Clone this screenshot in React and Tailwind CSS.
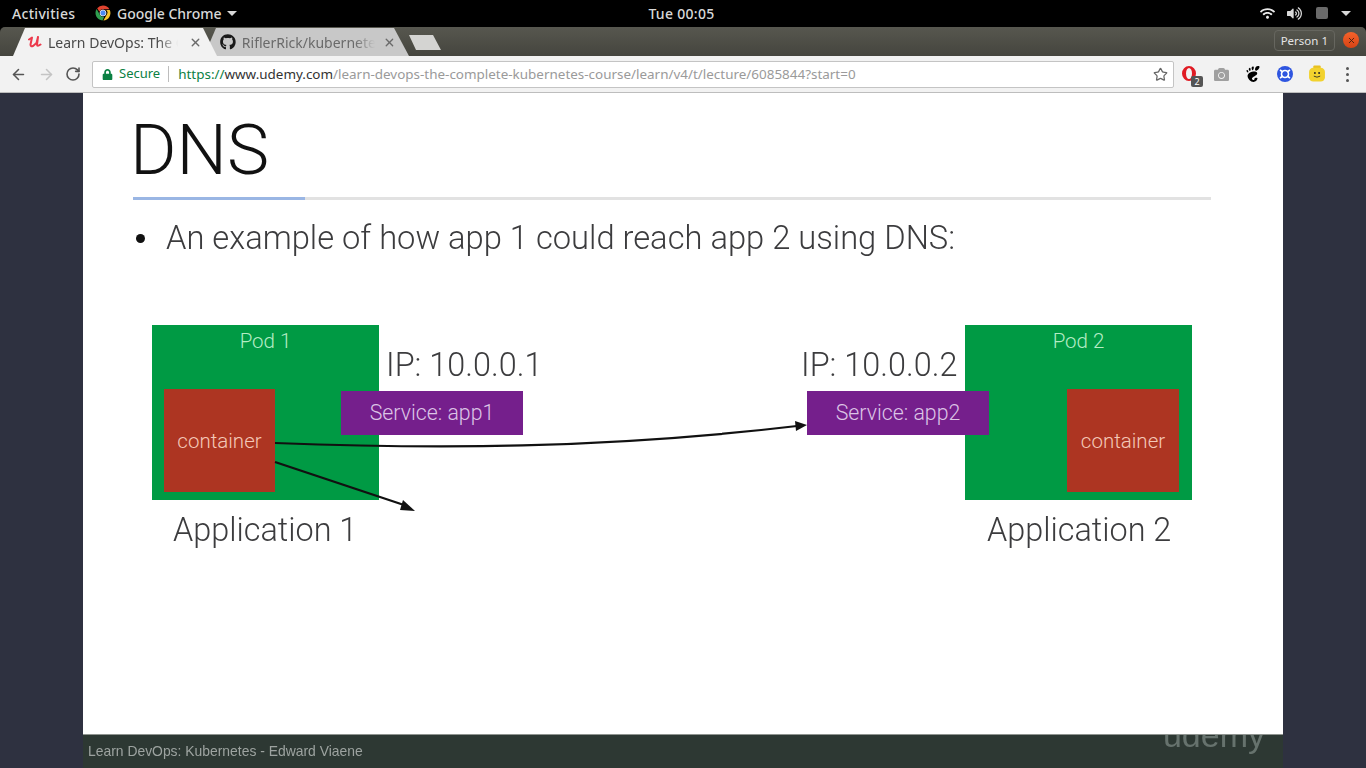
import React from 'react';
import { ArrowLeft, ArrowRight, RotateCw, Star, X } from 'lucide-react';
import { FaGithub, FaCamera, FaWifi, FaVolumeUp, FaLock } from 'react-icons/fa';
import { SiGnome } from 'react-icons/si';

function ChromeLogo() {
    return (
        <svg width="16" height="16" viewBox="0 0 32 32">
            <path d="M16 1a15 15 0 0 1 13 7.5H16a7.5 7.5 0 0 0-7 4.8L4.3 6.5A15 15 0 0 1 16 1z" fill="#e0432f" />
            <path d="M29.6 10a15 15 0 0 1-12.8 21l6.6-11.3a7.5 7.5 0 0 0-.9-9.7z" fill="#f7c52b" />
            <path d="M15 31A15 15 0 0 1 3.2 8.2l6.6 11.4a7.5 7.5 0 0 0 8.6 3.8z" fill="#2f9e4f" />
            <circle cx="16" cy="16" r="6" fill="#4c8bf0" stroke="#fff" strokeWidth="1.5" />
        </svg>
    );
}

function UdemyMark() {
    return (
        <svg width="14" height="14" viewBox="0 0 14 14" fill="none" stroke="#ec3a4c" strokeWidth="2" strokeLinecap="round" strokeLinejoin="round">
            <path d="M1 4.5 L4 2.5 L2.5 9.5 Q2.5 12 5 11 L8.5 8 L10 2 L9 9.5 Q9 12 12.5 9.5" />
        </svg>
    );
}

function TopBar() {
    return (
        <div className="grid h-[27px] grid-cols-[1fr_auto_1fr] items-center bg-black pb-[1px] pl-3 pr-[15px] font-['Noto_Sans',sans-serif] text-[14px] font-medium text-[#d8d8d8]">
            <div className="flex items-center">
                <span className="w-[83px] tracking-[0.3px]">Activities</span>
                <ChromeLogo />
                <span className="ml-1.5">Google Chrome</span>
                <span className="ml-[5px] h-0 w-0 border-x-[5px] border-t-[5px] border-x-transparent border-t-[#d8d8d8]"></span>
            </div>
            <span className="tracking-[0.3px]">Tue 00:05</span>
            <div className="flex items-center justify-end">
                <FaWifi className="text-[15px] text-[#e8e8e8]" />
                <FaVolumeUp className="ml-[12px] text-[15px] text-[#d8d8d8]" />
                <span className="ml-[14px] h-[12px] w-[12px] rounded-[2px] bg-[#6a6a6a]"></span>
                <span className="ml-[13px] h-0 w-0 border-x-[5px] border-t-[5px] border-x-transparent border-t-[#d8d8d8]"></span>
            </div>
        </div>
    );
}

function TabStrip() {
    return (
        <div className="flex h-[29px] items-end rounded-t-[5px] bg-gradient-to-b from-[#57574f] to-[#45453e] font-['Noto_Sans',sans-serif] text-[14px]">
            <div className="z-10 ml-[13px] flex h-[28px] w-[204px] items-center bg-[#f2f2f2] pl-[15px] pr-[10px] text-[#4a4a4a] [clip-path:polygon(0_100%,12px_0,190px_0,100%_100%)]">
                <UdemyMark />
                <span className="ml-1.5 w-[130px] overflow-hidden whitespace-nowrap [mask-image:linear-gradient(to_right,black_85%,transparent)]">Learn DevOps: The Complete</span>
                <X size={13} strokeWidth={2.5} className="ml-[11px] text-[#6a6a6a]" />
            </div>
            <div className="z-0 -ml-[13px] flex h-[28px] w-[205px] items-center bg-[#c8c8c8] pl-[16px] pr-[13px] text-[#6a6a6a] [clip-path:polygon(0_100%,12px_0,190px_0,100%_100%)]">
                <FaGithub className="text-[16px] text-[#1a1a1a]" />
                <span className="ml-1.5 w-[135px] overflow-hidden whitespace-nowrap [mask-image:linear-gradient(to_right,black_85%,transparent)]">RiflerRick/kubernetes</span>
                <X size={13} strokeWidth={2.5} className="ml-[8px] text-[#6a6a6a]" />
            </div>
            <div className="mb-[6px] h-[15px] w-[32px] bg-[#d4d4d2] [clip-path:polygon(0_0,24px_0,100%_100%,7px_100%)]"></div>
            <div className="ml-auto mb-[5px] flex items-center pr-[7px]">
                <span className="rounded-[4px] border border-[#66665f] px-[6px] py-[1px] text-[11.5px] text-[#e4e4e4]">Person 1</span>
                <span className="ml-[8px] flex h-[16px] w-[16px] items-center justify-center rounded-full bg-gradient-to-b from-[#f4622a] to-[#d84315]">
                    <X size={9} strokeWidth={2.5} className="text-[#4a2010]" />
                </span>
            </div>
        </div>
    );
}

function ExtensionIcons() {
    return (
        <div className="ml-[8px] flex items-center">
            <div className="relative h-[16px] w-[16px]">
                <span className="block h-[15px] w-[14px] rounded-[50%] border-x-[4px] border-y-[2px] border-[#e01b24]"></span>
                <span className="absolute -bottom-[5px] left-[9px] flex h-[11px] w-[12px] items-center justify-center rounded-[2px] bg-[#555] text-[9px] leading-none text-white">2</span>
            </div>
            <FaCamera className="ml-[16px] text-[15px] text-[#a0a0a0]" />
            <SiGnome className="ml-[16px] text-[16px] text-black" />
            <svg className="ml-[16px]" width="16" height="16" viewBox="0 0 16 16">
                <circle cx="8" cy="8" r="8" fill="#2e55e0" />
                <circle cx="8" cy="8" r="3.5" fill="none" stroke="#fff" strokeWidth="1.6" />
                <path d="M3 4l3 2M13 4l-3 2M3 12l3-2M13 12l-3-2" stroke="#fff" strokeWidth="1.6" />
            </svg>
            <svg className="ml-[15px]" width="18" height="18" viewBox="0 0 17 17">
                <rect x="5" y="0.5" width="7" height="3" rx="1" fill="#e8c020" />
                <rect x="1" y="2.5" width="15" height="13" rx="4" fill="#f2d22e" />
                <circle cx="6.5" cy="7.5" r="0.9" fill="#222" />
                <circle cx="10.5" cy="7.5" r="0.9" fill="#222" />
                <path d="M5.5 10.5q3 2 6 0" stroke="#222" strokeWidth="0.8" fill="none" />
            </svg>
            <div className="ml-[20px] flex flex-col gap-[3px]">
                <span className="h-[3px] w-[3px] rounded-full bg-[#555]"></span>
                <span className="h-[3px] w-[3px] rounded-full bg-[#555]"></span>
                <span className="h-[3px] w-[3px] rounded-full bg-[#555]"></span>
            </div>
        </div>
    );
}

function Toolbar() {
    return (
        <div className="flex h-[37px] items-center border-b border-[#bdbdbd] bg-[#f2f2f2] pl-[10px] font-['Noto_Sans',sans-serif]">
            <ArrowLeft size={17} strokeWidth={2.2} className="text-[#555]" />
            <ArrowRight size={17} strokeWidth={2.2} className="ml-[11px] text-[#c4c4c4]" />
            <RotateCw size={16} strokeWidth={2.4} className="ml-[10px] text-[#555]" />
            <div className="ml-[11px] flex h-[27px] w-[1082px] items-center rounded-[2px] border border-[#c4c4c4] bg-white pl-[9px] pr-[5px] text-[13px]">
                <FaLock className="text-[11px] text-[#0b8043]" />
                <span className="ml-[6px] text-[#0b8043]">Secure</span>
                <span className="ml-[8px] h-[16px] border-l border-[#bdbdbd]"></span>
                <span className="ml-[9px] flex-1 whitespace-nowrap text-[13.45px] text-[#9a9a9a]">
                    <span className="text-[#0b8043]">https://</span>
                    <span className="text-[#333]">www.udemy.com</span>
                    /learn-devops-the-complete-kubernetes-course/learn/v4/t/lecture/6085844?start=0
                </span>
                <Star size={15} strokeWidth={2} className="text-[#666]" />
            </div>
            <ExtensionIcons />
        </div>
    );
}

function Pod({ className, label, children }) {
    return (
        <div className={`absolute top-0 h-[175px] w-[227px] bg-[#009a44] pt-[1px] text-center text-[20.5px] text-[#b4ecc4] ${className}`}>
            {label}
            {children}
        </div>
    );
}

function Diagram() {
    return (
        <div className="relative mt-[67px] h-[240px] text-[#3c3c3e]">
            <Pod className="left-[69px]" label="Pod 1">
                <div className="absolute left-[12px] top-[64px] flex h-[103px] w-[111px] items-center justify-center bg-[#ad3522] pt-[2px] text-[#f4c8b8]">container</div>
            </Pod>
            <Pod className="left-[882px]" label="Pod 2">
                <div className="absolute left-[102px] top-[64px] flex h-[103px] w-[112px] items-center justify-center bg-[#ad3522] pt-[2px] text-[#f4c8b8]">container</div>
            </Pod>
            <div className="absolute left-[258px] top-[66px] flex h-[44px] w-[182px] items-center justify-center bg-[#751f8c] text-[21.3px] text-[#dcc4e6]">Service: app1</div>
            <div className="absolute left-[724px] top-[66px] flex h-[44px] w-[182px] items-center justify-center bg-[#751f8c] text-[21.3px] text-[#dcc4e6]">Service: app2</div>
            <span className="absolute left-[303px] top-[24px] text-[32.4px] leading-none">IP: 10.0.0.1</span>
            <span className="absolute left-[718px] top-[24px] text-[32.4px] leading-none">IP: 10.0.0.2</span>
            <span className="absolute left-[90px] top-[189px] text-[32.4px] leading-none">Application 1</span>
            <span className="absolute left-[904px] top-[189px] text-[32.4px] leading-none">Application 2</span>
            <svg className="absolute left-0 top-0" width="1200" height="240" fill="none" stroke="#111" strokeWidth="2.2">
                <path d="M192 118 C 350 124, 520 124, 714 101" />
                <path d="M724 100 L712 96 L713 106 Z" fill="#111" stroke="none" />
                <path d="M192 137 L324 181" />
                <path d="M332 186 L320 175 L317 185 Z" fill="#111" stroke="none" />
            </svg>
        </div>
    );
}

function Slide() {
    return (
        <div className="flex h-[675px] w-[1200px] flex-col bg-white font-['Roboto',sans-serif] font-light">
            <div className="flex-1 overflow-hidden [filter:blur(0.4px)]">
                <h1 className="ml-[47px] mt-[17px] text-[71px] font-light leading-[80px] text-[#111]">DNS</h1>
                <div className="ml-[50px] mt-[7px] flex h-[3px] w-[1078px] bg-[#e2e2e2]">
                    <div className="w-[172px] bg-[#9ab6e4]"></div>
                </div>
                <div className="ml-[53px] mt-[18px] flex items-center text-[32.7px] leading-[40px] text-[#3c3c3e]">
                    <span className="h-[9px] w-[9px] rounded-full bg-[#111]"></span>
                    <span className="ml-[21px]">An example of how app 1 could reach app 2 using DNS:</span>
                </div>
                <Diagram />
            </div>
            <div className="flex h-[34px] justify-between overflow-hidden border-t border-[#8f9490] bg-[#2d3833] pl-[5px] pr-[18px] font-['Liberation_Sans',sans-serif] font-normal [filter:blur(0.4px)]">
                <span className="pt-[6px] text-[13.9px] text-[#9da3a0]">Learn DevOps: Kubernetes - Edward Viaene</span>
                <span className="-mt-[17px] text-[34px] leading-none text-[#66726d]">udemy</span>
            </div>
        </div>
    );
}

export default function App() {
    return (
        <div className="h-[768px] w-[1366px] overflow-hidden bg-black">
            <TopBar />
            <TabStrip />
            <Toolbar />
            <div className="flex justify-center bg-[#2e3140]">
                <Slide />
            </div>
        </div>
    );
}
